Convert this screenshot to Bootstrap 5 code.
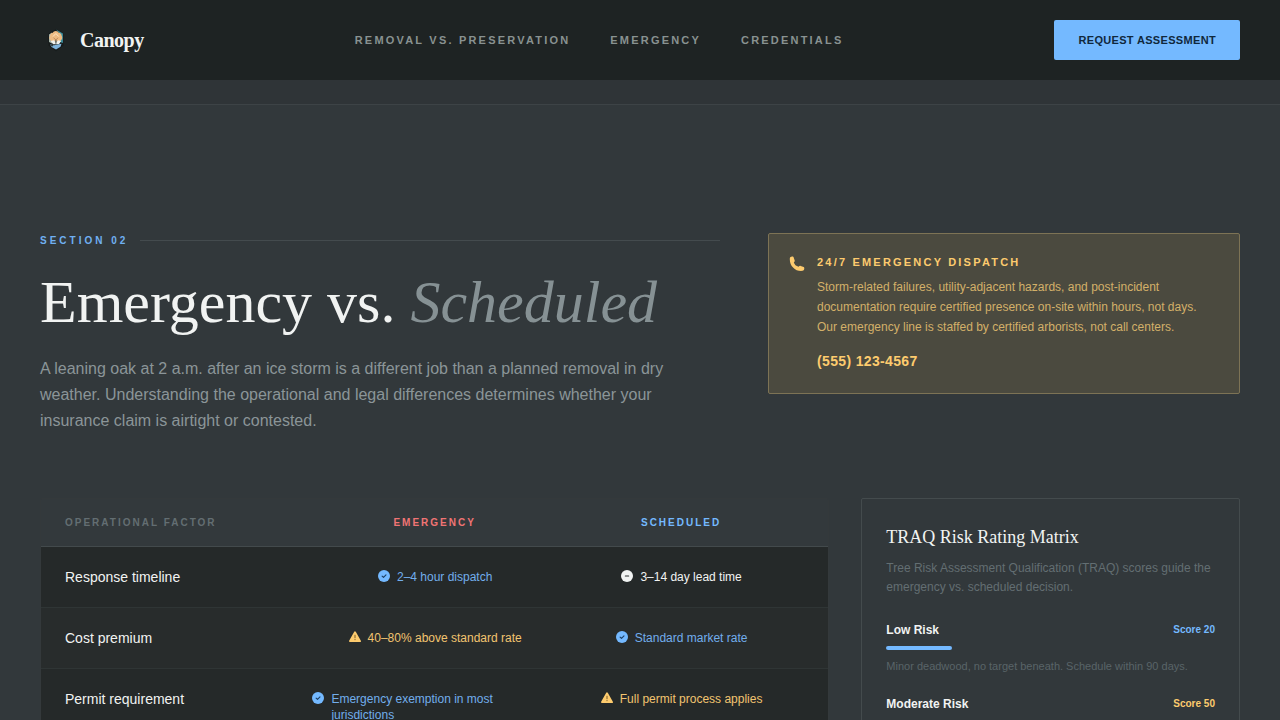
<!DOCTYPE html>
<html lang="en" data-bs-theme="dark">
<head>
<meta charset="utf-8">
<meta name="viewport" content="width=device-width, initial-scale=1">
<title>Canopy – Emergency vs. Scheduled</title>
<link href="https://cdn.jsdelivr.net/npm/bootstrap@5.3.0/dist/css/bootstrap.min.css" rel="stylesheet">
<style>
  :root { --sky: #74b9ff; --amber: #fdcb6e; --coral: #f07474; --mist: #8b9598; --slate: #636e72; --snow: #f1f3f2; }
  body { font-family: "Liberation Sans", Arial, sans-serif; background: #32383b; color: var(--snow); }
  h1, h2, h3 { color: inherit; }
  .serif { font-family: "Liberation Serif", "Times New Roman", serif; }
  .gutter-page { padding-left: 40px; padding-right: 40px; }
  .site-nav { background: #1e2323; padding-top: 20px; padding-bottom: 20px; }
  .brand { font-size: 20px; line-height: 28px; letter-spacing: -0.025em; color: var(--snow); }
  .menu { gap: 40px; }
  .menu a { font-size: 11px; line-height: 16px; letter-spacing: 0.2em; color: #899291; }
  .btn-request { background: var(--sky); color: #10283c; font-size: 11px; line-height: 16px; letter-spacing: 0.03em; padding: 12px 24px; border: 0; border-radius: 2px; }
  .btn-request:hover { background: #94c9ff; color: #10283c; }
  .strip { height: 25px; background: #2f3437; border-bottom: 1px solid #3d4346; }
  .section-pad { padding-top: 128px; padding-bottom: 128px; }
  .eyebrow { font-size: 10px; line-height: 15px; letter-spacing: 0.3em; color: #70b0f2; gap: 12px; }
  .rule { height: 1px; background: #444b4e; }
  .headline { font-size: 60px; line-height: 60px; margin: 24px 0; font-weight: 400; }
  .headline em { color: #869194; }
  .intro { font-size: 16px; line-height: 26px; color: var(--mist); max-width: 640px; }
  .dispatch { background: #4b4a3f; border: 1px solid #7d7355; border-radius: 2px; padding: 20px; gap: 12px; color: var(--amber); }
  .dispatch svg { margin-top: 2px; }
  .dispatch h2 { font-size: 11px; line-height: 17px; letter-spacing: 0.2em; margin: 0 0 6px; }
  .dispatch p { font-size: 12px; line-height: 20px; color: #d3b069; margin: 0 0 12px; }
  .dispatch a { font-size: 14px; line-height: 24px; letter-spacing: 0.025em; color: var(--amber); }
  .detail-row { --bs-gutter-x: 32px; margin-top: 64px; }
  .factors { border: 1px solid #34393b; border-radius: 2px; overflow: hidden; }
  .factors table { width: 100%; }
  .factors table, .factors thead, .factors tbody { display: block; }
  .factors tr { display: grid; grid-template-columns: repeat(3, minmax(0, 1fr)); padding: 20px 24px; border-bottom: 1px solid #2f3535; background: #252929; }
  .factors tbody tr:nth-child(even) { background: #282c2c; }
  .factors thead tr { padding: 16px 24px; background: #33393c; border-bottom-color: #434a4c; }
  .factors th { padding: 0; }
  .factors thead th { font-size: 10px; line-height: 15px; letter-spacing: 0.2em; }
  .factors tbody th { font-size: 14px; line-height: 20px; font-weight: 400; }
  .factors td { font-size: 12px; line-height: 16px; padding: 2px 0 0; }
  .fact { gap: 6px; }
  .sky { color: var(--sky); } .amber { color: var(--amber); } .coral { color: var(--coral); } .slate { color: var(--slate); }
  .sky-soft { color: #72aeec; } .amber-soft { color: #f2c470; }
  .matrix { border: 1px solid #444b4d; border-radius: 2px; padding: 24px; }
  .matrix h2 { font-size: 18px; line-height: 28px; margin: 0 0 8px; font-weight: 400; }
  .matrix .lede { font-size: 12px; line-height: 19px; margin: 0 0 25px; color: var(--slate); }
  .risk { margin-bottom: 22px; }
  .risk h3 { font-size: 12px; line-height: 16px; margin: 0; }
  .risk .score { font-size: 10px; line-height: 16px; }
  .risk .meter-line { height: 4px; border-radius: 4px; margin: 8px 0; background: var(--sky); }
  .risk p { font-size: 11px; line-height: 16px; margin: 0; color: #596468; }
</style>
</head>
<body>
<svg class="d-none" xmlns="http://www.w3.org/2000/svg">
  <symbol id="i-check" viewBox="0 0 14 14"><circle cx="7" cy="7" r="6" fill="currentColor"/><path d="M5.100 7.100 6.500 8.400 9 5.800" fill="none" stroke="#1d3f63" stroke-width="1.1" stroke-linecap="round" stroke-linejoin="round"/></symbol>
  <symbol id="i-minus" viewBox="0 0 14 14"><circle cx="7" cy="7" r="6" fill="currentColor"/><path d="M5.400 7h3.200" stroke="#2a2e2e" stroke-width="1.2" stroke-linecap="round"/></symbol>
  <symbol id="i-warn" viewBox="0 0 14 14"><path d="M7 2.200 12.100 11.100H1.900Z" fill="currentColor" stroke="currentColor" stroke-width="1.800" stroke-linejoin="round"/><path d="M7 5.200v2.600" stroke="#7a5c26" stroke-width="1" stroke-linecap="round"/><circle cx="7" cy="9.600" r=".6" fill="#7a5c26"/></symbol>
</svg>

<nav class="site-nav gutter-page d-flex align-items-center justify-content-between">
  <a href="#" class="d-flex align-items-center gap-2 text-decoration-none">
    <svg width="32" height="32" viewBox="0 0 32 32" aria-hidden="true">
      <path d="M16 5.200 23.600 9.600v12L16 27.200 8.400 21.600v-12Z" fill="#171b1b"/>
      <path d="M16 5.500 22.900 9.500V19L20 18V10Z" fill="#3d8f9f"/>
      <path d="M9 10.500 12 8.500v11l-3-1.500Z" fill="#a8b5aa"/>
      <path d="M15.800 7c1.500 0 2.500.8 2.900 1.800 1.700.1 2.900 1.300 2.900 2.900 1 1.400.8 3.300-.5 4.400-.5 1.500-2.200 2.300-3.700 1.700h-3.200c-1.600.5-3.200-.3-3.700-1.700-1.400-1-1.600-3-.5-4.400 0-1.600 1.200-2.800 2.900-2.900.4-1 1.500-1.800 2.900-1.800Z" fill="#eebb83"/>
      <path d="M13 12.500 15.900 9.500l2.800 3" fill="none" stroke="#ffe6c2" stroke-width="1"/>
      <path d="M13.500 13.800 15.900 15.800l2.300-2" fill="none" stroke="#b98256" stroke-width=".8"/>
      <path d="M10.800 17 13.800 16.300 16 18.500l2.200-2.200 2.900.7-2.100 3.200h-6Z" fill="#eef1ed"/>
      <path d="M15.900 15.800v4" stroke="#56605d" stroke-width="1.200"/>
      <path d="M10 20.300 14 21.300 21.500 19.700 20.500 22.800 16 25.600 11.500 23Z" fill="#7db3dc"/>
      <path d="M10 20.300 13.500 21.200 12 22.800Z" fill="#303c3e"/>
    </svg>
    <span class="brand serif fw-bold">Canopy</span>
  </a>
  <div class="menu d-flex align-items-center fw-bold text-uppercase">
    <a href="#preservation" class="text-decoration-none">Removal vs. Preservation</a>
    <a href="#emergency" class="text-decoration-none">Emergency</a>
    <a href="#credentials" class="text-decoration-none">Credentials</a>
  </div>
  <button type="button" class="btn btn-request fw-bold text-uppercase">Request Assessment</button>
</nav>
<div class="strip"></div>

<main id="emergency" class="gutter-page section-pad">
  <div class="row gx-5">
    <div class="col-7">
      <div class="eyebrow d-flex align-items-center fw-bold text-uppercase"><span>Section 02</span><span class="rule flex-grow-1"></span></div>
      <h1 class="headline serif">Emergency vs. <em>Scheduled</em></h1>
      <p class="intro mb-0">A leaning oak at 2 a.m. after an ice storm is a different job than a planned removal in dry weather. Understanding the operational and legal differences determines whether your insurance claim is airtight or contested.</p>
    </div>
    <div class="col-5">
      <aside class="dispatch d-flex align-items-start">
        <svg class="flex-shrink-0" width="16" height="16" viewBox="0 0 16 16" fill="currentColor" aria-hidden="true"><path d="M1.200 1.300C2 .5 3.600.3 4.500.9L5.700 4.400C5.900 5.100 5.500 5.700 4.800 6.200 5.400 8.500 7.100 10.100 9.600 10.700 10.200 9.900 10.900 9.600 11.700 9.900L14.700 11.100C15.500 11.600 15.500 13.300 14.800 14.100 14.200 14.800 13.200 15 12.200 15 5.800 15 .8 9.800.8 3.200.8 2.500.9 1.700 1.200 1.300Z"/></svg>
        <div>
          <h2 class="fw-bold text-uppercase">24/7 Emergency Dispatch</h2>
          <p>Storm-related failures, utility-adjacent hazards, and post-incident documentation require certified presence on-site within hours, not days. Our emergency line is staffed by certified arborists, not call centers.</p>
          <a href="tel:+15551234567" class="d-block fw-bold text-decoration-none">(555) 123-4567</a>
        </div>
      </aside>
    </div>
  </div>

  <div class="row detail-row align-items-start">
    <div class="col-8">
      <div class="factors">
        <table>
          <thead>
            <tr class="text-uppercase"><th scope="col" class="slate">Operational Factor</th><th scope="col" class="coral text-center">Emergency</th><th scope="col" class="sky text-center">Scheduled</th></tr>
          </thead>
          <tbody>
            <tr>
              <th scope="row">Response timeline</th>
              <td><div class="fact d-flex justify-content-center align-items-start sky"><svg class="flex-shrink-0" width="14" height="14"><use href="#i-check"/></svg><span class="sky-soft">2–4 hour dispatch</span></div></td>
              <td><div class="fact d-flex justify-content-center align-items-start"><svg class="flex-shrink-0" width="14" height="14"><use href="#i-minus"/></svg><span>3–14 day lead time</span></div></td>
            </tr>
            <tr>
              <th scope="row">Cost premium</th>
              <td><div class="fact d-flex justify-content-center align-items-start amber"><svg class="flex-shrink-0" width="14" height="14"><use href="#i-warn"/></svg><span class="amber-soft">40–80% above standard rate</span></div></td>
              <td><div class="fact d-flex justify-content-center align-items-start sky"><svg class="flex-shrink-0" width="14" height="14"><use href="#i-check"/></svg><span class="sky-soft">Standard market rate</span></div></td>
            </tr>
            <tr>
              <th scope="row">Permit requirement</th>
              <td><div class="fact d-flex justify-content-center align-items-start sky"><svg class="flex-shrink-0" width="14" height="14"><use href="#i-check"/></svg><span class="sky-soft">Emergency exemption in most jurisdictions</span></div></td>
              <td><div class="fact d-flex justify-content-center align-items-start amber"><svg class="flex-shrink-0" width="14" height="14"><use href="#i-warn"/></svg><span class="amber-soft">Full permit process applies</span></div></td>
            </tr>
          </tbody>
        </table>
      </div>
    </div>
    <div class="col-4">
      <section class="matrix">
        <h2 class="serif">TRAQ Risk Rating Matrix</h2>
        <p class="lede">Tree Risk Assessment Qualification (TRAQ) scores guide the emergency vs. scheduled decision.</p>
        <div class="risk">
          <div class="d-flex justify-content-between"><h3 class="fw-bold">Low Risk</h3><span class="score fw-bold sky">Score 20</span></div>
          <div class="meter-line" style="width: 20%"></div>
          <p>Minor deadwood, no target beneath. Schedule within 90 days.</p>
        </div>
        <div class="risk mb-0">
          <div class="d-flex justify-content-between"><h3 class="fw-bold">Moderate Risk</h3><span class="score fw-bold amber">Score 50</span></div>
        </div>
      </section>
    </div>
  </div>
</main>
<script src="https://cdn.jsdelivr.net/npm/bootstrap@5.3.0/dist/js/bootstrap.bundle.min.js"></script>
</body>
</html>
